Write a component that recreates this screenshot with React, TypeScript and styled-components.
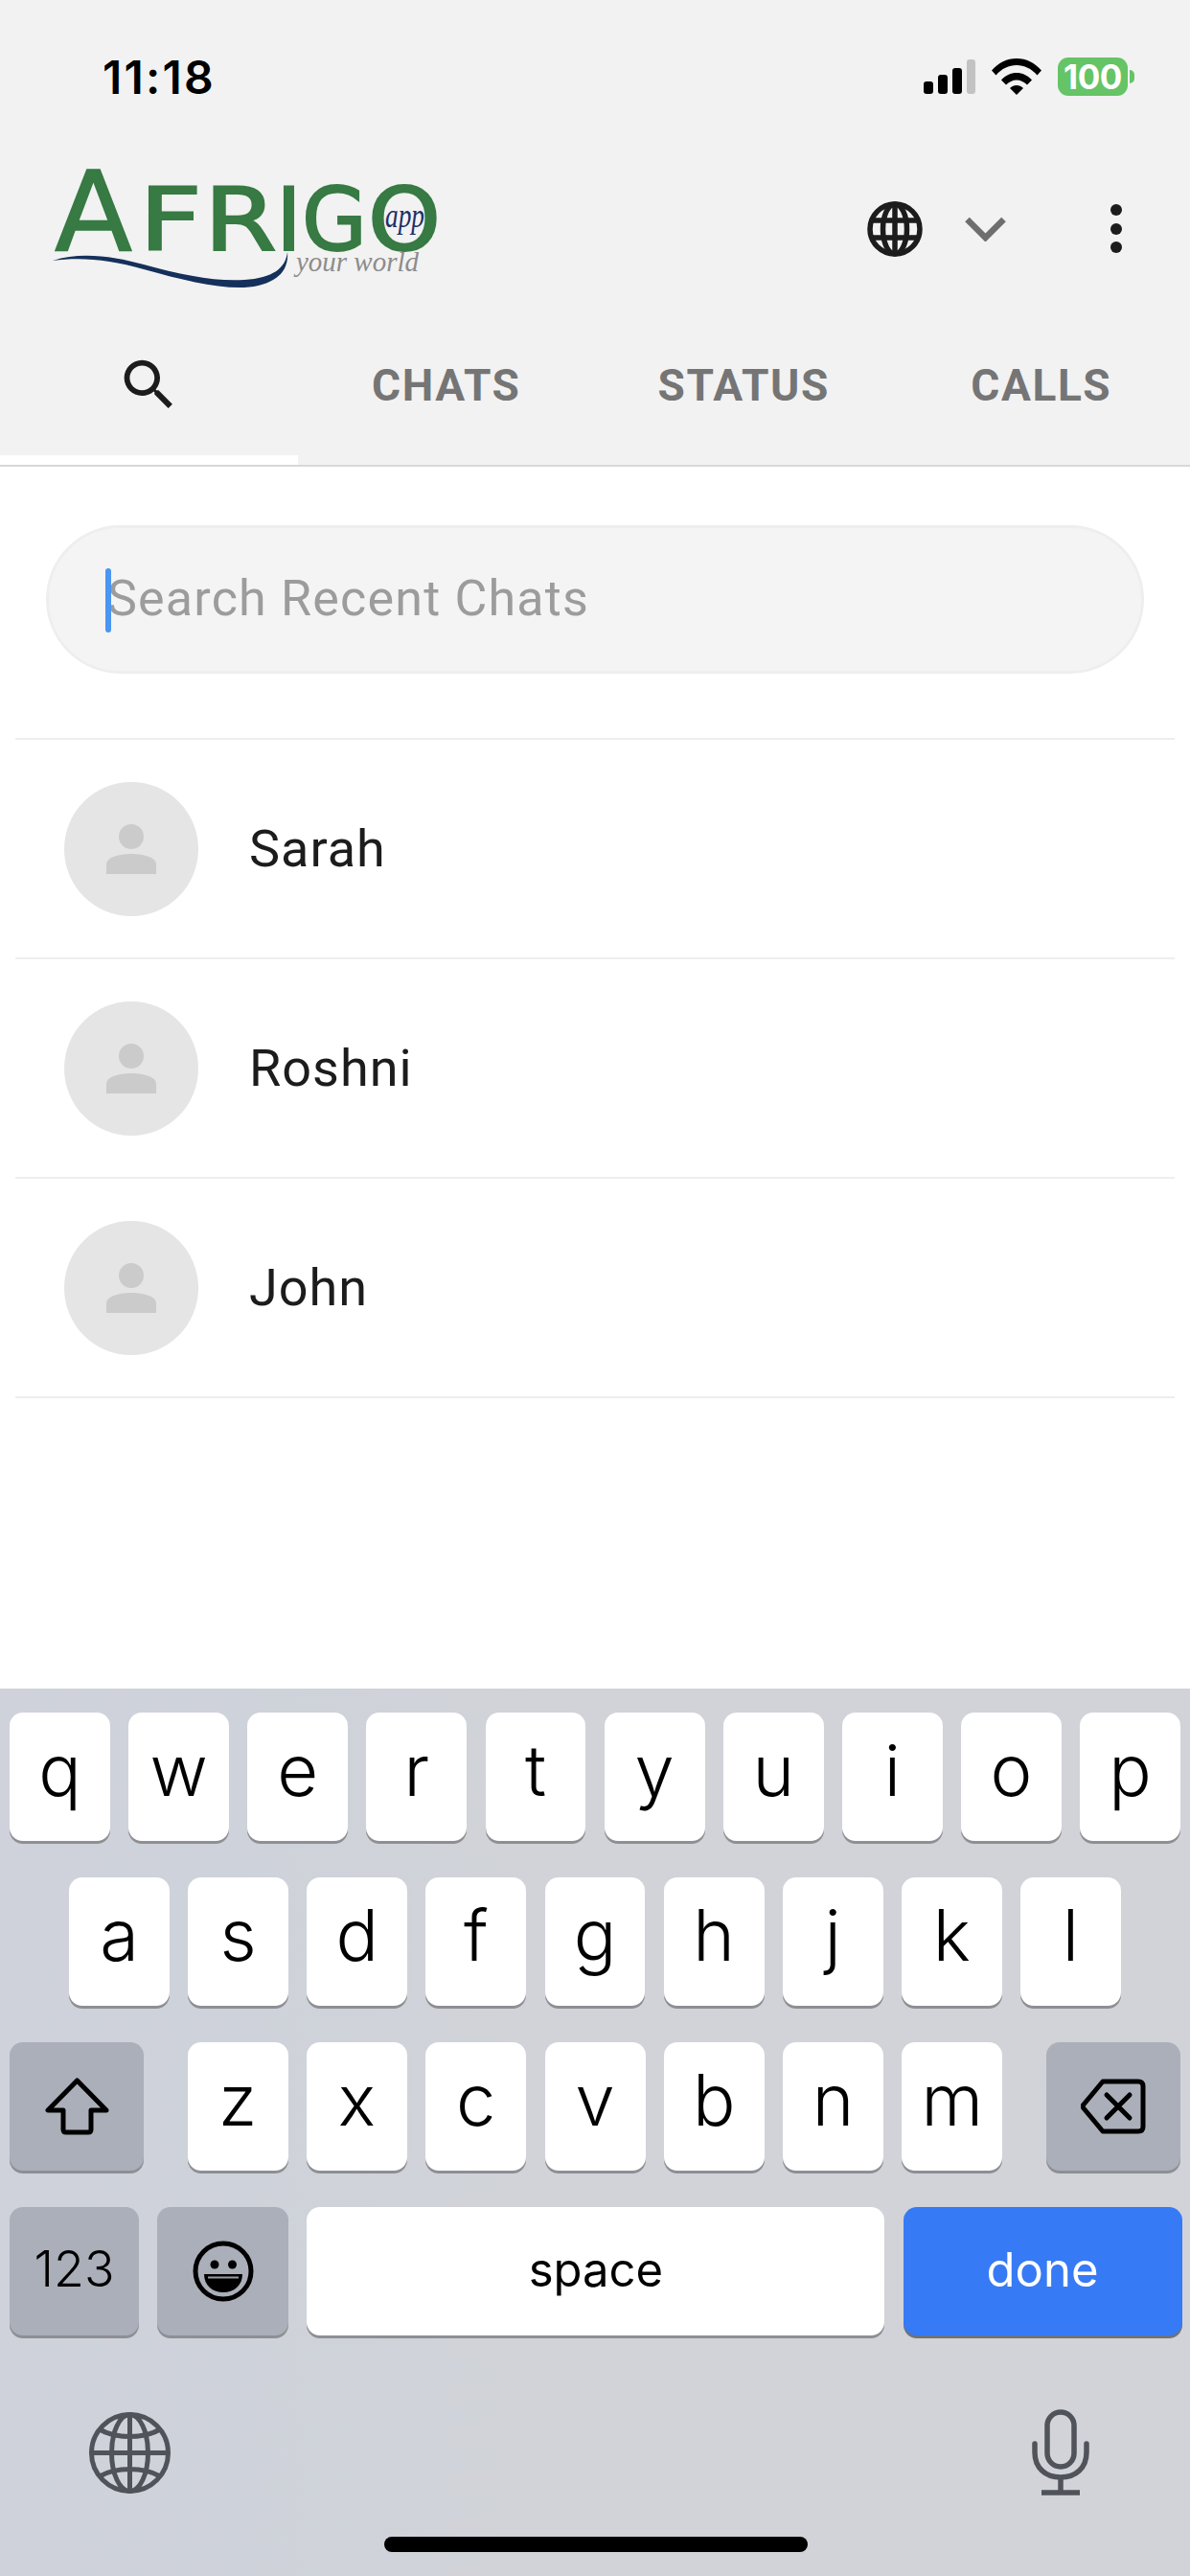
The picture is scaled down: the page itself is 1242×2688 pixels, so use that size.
import React from "react";
import styled, { createGlobalStyle } from "styled-components";

const Global = createGlobalStyle`
  html, body { margin: 0; padding: 0; background: #fff; }
  * { box-sizing: border-box; }
`;

const Screen = styled.div`
  width: 1242px;
  height: 2688px;
  display: flex;
  flex-direction: column;
  overflow: hidden;
  background: #fff;
  font-family: Roboto, "Liberation Sans", sans-serif;
`;

const Header = styled.header`
  background: #f2f2f2;
  border-bottom: 2px solid #d8d8d8;
`;

const StatusBar = styled.div`
  height: 160px;
  display: flex;
  align-items: center;
  justify-content: space-between;
  padding: 0 58px 0 107px;
`;

const Time = styled.div`
  font-family: Inter, sans-serif;
  font-weight: 600;
  font-size: 48px;
  letter-spacing: 2.200px;
  color: #000;
`;

const StatusIcons = styled.div`
  display: flex;
  align-items: center;
  gap: 17px;
`;

const Battery = styled.div`
  position: relative;
  width: 73px;
  height: 40px;
  margin-right: 7px;
  border-radius: 11px;
  background: #65c466;
  display: flex;
  align-items: center;
  justify-content: center;
  color: #fff;
  font-family: Inter, sans-serif;
  font-weight: 700;
  font-size: 35px;
  letter-spacing: -0.5px;
  &::after {
    content: "";
    position: absolute;
    right: -7px;
    top: 13px;
    width: 5px;
    height: 14px;
    border-radius: 0 7px 7px 0;
    background: #65c466;
  }
`;

const AppBar = styled.div`
  height: 158px;
  display: flex;
  align-items: center;
  padding: 0 71px 0 45px;
`;

const LogoMark = styled.svg`
  width: 420px;
  height: 190px;
  flex: none;
`;

const BarActions = styled.div`
  margin-left: auto;
  display: flex;
  align-items: center;
`;

const Chevron = styled.svg`
  width: 43px;
  height: 26px;
  margin: 0 109px 0 44px;
`;

const Tabs = styled.nav`
  height: 167px;
  display: flex;
`;

const Tab = styled.div<{ $active?: boolean }>`
  flex: 1;
  display: flex;
  align-items: center;
  justify-content: center;
  font-family: Roboto, sans-serif;
  font-weight: 700;
  font-size: 46px;
  letter-spacing: 1.600px;
  color: #757575;
  box-shadow: ${(p) => (p.$active ? "inset 0 -10px 0 #fff" : "none")};
`;

const Body = styled.main`
  flex: 1;
  background: #fff;
`;

const SearchWrap = styled.div`
  padding: 61px 48px 67px;
`;

const SearchBox = styled.div`
  position: relative;
  height: 155px;
  border-radius: 78px;
  border: 3px solid #eeeeee;
  background: #f4f4f4;
  display: flex;
  align-items: center;
  padding: 0 0 2px 61px;
  font-size: 52px;
  letter-spacing: 1.200px;
  color: #9c9c9c;
`;

const Caret = styled.span`
  position: absolute;
  left: 59px;
  top: 42px;
  width: 6px;
  height: 67px;
  border-radius: 3px;
  background: #4a96f0;
`;

const ChatList = styled.ul`
  list-style: none;
  margin: 0 16px;
  padding: 0;
  border-top: 2px solid #eeeeee;
`;

const ChatRow = styled.li`
  height: 229px;
  display: flex;
  align-items: center;
  padding-left: 51px;
  border-bottom: 2px solid #eeeeee;
`;

const Avatar = styled.div`
  width: 140px;
  height: 140px;
  border-radius: 50%;
  background: #e5e5e5;
  display: flex;
  align-items: center;
  justify-content: center;
`;

const ChatName = styled.div`
  margin-left: 53px;
  font-weight: 400;
  font-size: 54px;
  letter-spacing: 1px;
  color: #1c1c1c;
`;

const Keyboard = styled.section`
  height: 926px;
  background: linear-gradient(90deg, #cfd2da 0%, #ced2da 20%, #d1d3d8 45%, #d2d3d8 100%);
  padding-top: 25px;
  display: flex;
  flex-direction: column;
  position: relative;
  font-family: Inter, "Liberation Sans", sans-serif;
`;

const KeyRow = styled.div<{ $inset?: number }>`
  height: 134px;
  margin-bottom: 38px;
  padding: 0 ${(p) => p.$inset ?? 10}px;
  display: flex;
  gap: 19.200px;
  justify-content: space-between;
`;

const LetterGroup = styled.div`
  display: flex;
  gap: 19.300px;
`;

const Key = styled.div<{ $w?: number; $kind?: "letter" | "fn" | "primary"; $size?: number; $weight?: number }>`
  flex: ${(p) => (p.$w ? `0 0 ${p.$w}px` : "1 1 0")};
  height: 134px;
  border-radius: 14px;
  display: flex;
  align-items: center;
  justify-content: center;
  background: ${(p) => (p.$kind === "fn" ? "#abafb9" : p.$kind === "primary" ? "#377af5" : "#ffffff")};
  box-shadow: 0 3px 0 ${(p) => (p.$kind === "primary" ? "#6f7278" : "#8e8f94")};
  color: ${(p) => (p.$kind === "primary" ? "#fff" : "#000")};
  font-size: ${(p) => p.$size ?? 74}px;
  font-weight: ${(p) => p.$weight ?? 300};
  line-height: 1;
  padding-bottom: ${(p) => (p.$size ? 4 : 14)}px;
`;

const LetterKey = styled(Key)`
  flex: 0 0 105px;
`;

const IconKey = styled(Key)`
  padding-bottom: 0;
`;

const KeyboardFooter = styled.div`
  display: flex;
  justify-content: space-between;
  align-items: center;
  height: 90px;
  margin-top: 39px;
  padding: 0 105px 0 93px;
`;

const HomeBar = styled.div`
  position: absolute;
  left: 401px;
  bottom: 25px;
  width: 442px;
  height: 16px;
  border-radius: 8px;
  background: #000;
`;

const SignalIcon = () => (
  <svg width="54" height="36" viewBox="0 0 54 36">
    <rect x="0" y="23" width="10" height="13" rx="3" fill="#000" />
    <rect x="15" y="16" width="10" height="20" rx="3" fill="#000" />
    <rect x="30" y="9" width="10" height="27" rx="3" fill="#000" />
    <rect x="45" y="0" width="9" height="36" rx="3" fill="#c2c2c2" />
  </svg>
);

const WifiIcon = () => (
  <svg width="52" height="38" viewBox="0 0 52 38">
    <path d="M0 12.500C7 4.500 16 0 26 0s19 4.500 26 12.500l-4.500 5C41.500 10.500 34 7 26 7S10.500 10.500 4.500 17.500z" fill="#000" />
    <path d="M10 22.500C14.500 17.500 20 15 26 15s11.500 2.500 16 7.500l-5 5C34 24.500 30 22.500 26 22.500s-8 2-11 5z" fill="#000" />
    <path d="M19 31c2-2 4.500-3 7-3s5 1 7 3l-7 7z" fill="#000" />
  </svg>
);

const logoLetters = [
  { c: "F", x: 90, w: 66 },
  { c: "R", x: 158, w: 76 },
  { c: "I", x: 233, w: 27 },
  { c: "G", x: 260, w: 68 },
  { c: "O", x: 329, w: 76 },
];

const Logo = () => (
  <LogoMark viewBox="-10 -34 420 190">
    <text x="2" y="84" fontFamily="'DejaVu Sans', sans-serif" fontSize="116" fill="#377a43" stroke="#377a43" strokeWidth="1.500" textLength="81" lengthAdjust="spacingAndGlyphs">A</text>
    {logoLetters.map((l) => (
      <text key={l.c} x={l.x} y="83" fontFamily="'DejaVu Sans', sans-serif" fontSize="90" fill="#377a43" stroke="#377a43" strokeWidth="2" textLength={l.w} lengthAdjust="spacingAndGlyphs">{l.c}</text>
    ))}
    <text x="347" y="59" fontFamily="'Liberation Serif', serif" fontStyle="italic" fontSize="36" fill="#1d2f66" textLength="41" lengthAdjust="spacingAndGlyphs">app</text>
    <text x="254" y="105" fontFamily="'Liberation Serif', serif" fontStyle="italic" fontSize="30" fill="#8c8c8c" textLength="128" lengthAdjust="spacingAndGlyphs">your world</text>
    <path d="M0 94C30 84 65 90 95 98C135 109 170 116 200 114C230 112 243 102 245 85C247 107 230 120 200 122C170 123 135 114 95 103C60 93 30 90 0 94Z" fill="#15305a" />
  </LogoMark>
);

const HeaderGlobe = () => (
  <svg width="58" height="58" viewBox="0 0 58 58" fill="none" stroke="#1c1c1c" strokeWidth="5.500">
    <circle cx="29" cy="29" r="26" />
    <ellipse cx="29" cy="29" rx="12.500" ry="26" />
    <path d="M29 3V55M5 20H53M5 38H53" />
  </svg>
);

const Dots = () => (
  <svg width="12" height="52" viewBox="0 0 12 52" fill="#1c1c1c">
    <circle cx="6" cy="6" r="6" />
    <circle cx="6" cy="26" r="6" />
    <circle cx="6" cy="45" r="6" />
  </svg>
);

const SearchIcon = () => (
  <svg width="69" height="69" viewBox="0 0 24 24" fill="#1c1c1c">
    <path d="M15.500 14h-.79l-.28-.27C15.410 12.590 16 11.110 16 9.500 16 5.910 13.090 3 9.500 3S3 5.910 3 9.500 5.910 16 9.500 16c1.610 0 3.090-.59 4.230-1.570l.27.28v.79l5 4.990L20.490 19l-4.990-5zm-6 0C7.010 14 5 11.990 5 9.500S7.010 5 9.500 5 14 7.010 14 9.500 11.990 14 9.500 14z" />
  </svg>
);

const PersonIcon = () => (
  <svg width="52" height="52" viewBox="0 0 52 52" fill="#cbcbcb">
    <ellipse cx="26" cy="13" rx="13" ry="13" />
    <path d="M0 52V42C0 35 12 31 26 31s26 4 26 11V52z" />
  </svg>
);

const ShiftIcon = () => (
  <svg width="67" height="60" viewBox="0 0 67 60" fill="none" stroke="#000" strokeWidth="5" strokeLinejoin="round">
    <path d="M33.500 3L3 34H19V54Q19 57 22 57H45Q48 57 48 54V34H64Z" />
  </svg>
);

const DeleteIcon = () => (
  <svg width="68" height="58" viewBox="0 0 68 58" fill="none" stroke="#000" strokeWidth="5" strokeLinecap="round" strokeLinejoin="round">
    <path d="M23 3H60Q65 3 65 8V50Q65 55 60 55H23L3 31Q1 29 3 27Z" />
    <path d="M27 17L51 41M51 17L27 41" />
  </svg>
);

const EmojiIcon = () => (
  <svg width="64" height="64" viewBox="0 0 64 64">
    <circle cx="32" cy="32" r="29" fill="none" stroke="#000" strokeWidth="5" />
    <circle cx="23" cy="25" r="4.500" fill="#000" />
    <circle cx="41.500" cy="25" r="4.500" fill="#000" />
    <path d="M12 35H52C52 47 43 54 32 54S12 47 12 35Z" fill="#000" />
    <path d="M16 38.500H48" stroke="#9a9ca3" strokeWidth="2" />
  </svg>
);

const KeyboardGlobe = () => (
  <svg width="85" height="85" viewBox="0 0 85 85" fill="none" stroke="#50535a" strokeWidth="5">
    <circle cx="42.500" cy="42.500" r="40" />
    <ellipse cx="42.500" cy="42.500" rx="19" ry="40" />
    <path d="M42.500 2V83M2 42.500H83M11 18C28 28 57 28 74 18M11 67C28 57 57 57 74 67" />
  </svg>
);

const MicIcon = () => (
  <svg width="60" height="90" viewBox="0 0 60 90" fill="none" stroke="#50535a" strokeWidth="5.500" strokeLinecap="round">
    <rect x="16" y="3" width="28" height="57" rx="14" />
    <path d="M3 36V45C3 61 14 71 30 71S57 61 57 45V36" />
    <path d="M30 71V86M10 87H50" strokeLinecap="butt" />
  </svg>
);

const chats = ["Sarah", "Roshni", "John"];
const row1 = "qwertyuiop".split("");
const row2 = "asdfghjkl".split("");
const row3 = "zxcvbnm".split("");

export default function App() {
  return (
    <Screen>
      <Global />
      <Header>
        <StatusBar>
          <Time>11:18</Time>
          <StatusIcons>
            <SignalIcon />
            <WifiIcon />
            <Battery>100</Battery>
          </StatusIcons>
        </StatusBar>
        <AppBar>
          <Logo />
          <BarActions>
            <HeaderGlobe />
            <Chevron viewBox="0 0 43 26" fill="none" stroke="#6e6e6e" strokeWidth="6.500">
              <path d="M2.500 3L21.500 22L40.500 3" />
            </Chevron>
            <Dots />
          </BarActions>
        </AppBar>
        <Tabs>
          <Tab $active>
            <SearchIcon />
          </Tab>
          <Tab>CHATS</Tab>
          <Tab>STATUS</Tab>
          <Tab>CALLS</Tab>
        </Tabs>
      </Header>
      <Body>
        <SearchWrap>
          <SearchBox>
            <Caret />
            Search Recent Chats
          </SearchBox>
        </SearchWrap>
        <ChatList>
          {chats.map((name) => (
            <ChatRow key={name}>
              <Avatar>
                <PersonIcon />
              </Avatar>
              <ChatName>{name}</ChatName>
            </ChatRow>
          ))}
        </ChatList>
      </Body>
      <Keyboard>
        <KeyRow>
          {row1.map((k) => (
            <Key key={k}>{k}</Key>
          ))}
        </KeyRow>
        <KeyRow $inset={72}>
          {row2.map((k) => (
            <Key key={k}>{k}</Key>
          ))}
        </KeyRow>
        <KeyRow>
          <IconKey $w={140} $kind="fn">
            <ShiftIcon />
          </IconKey>
          <LetterGroup>
            {row3.map((k) => (
              <LetterKey key={k}>{k}</LetterKey>
            ))}
          </LetterGroup>
          <IconKey $w={140} $kind="fn">
            <DeleteIcon />
          </IconKey>
        </KeyRow>
        <KeyRow>
          <Key $w={135} $kind="fn" $size={52}>123</Key>
          <IconKey $w={137} $kind="fn">
            <EmojiIcon />
          </IconKey>
          <Key $w={603} $size={49} $weight={400}>space</Key>
          <Key $w={291} $kind="primary" $size={49} $weight={400}>done</Key>
        </KeyRow>
        <KeyboardFooter>
          <KeyboardGlobe />
          <MicIcon />
        </KeyboardFooter>
        <HomeBar />
      </Keyboard>
    </Screen>
  );
}
